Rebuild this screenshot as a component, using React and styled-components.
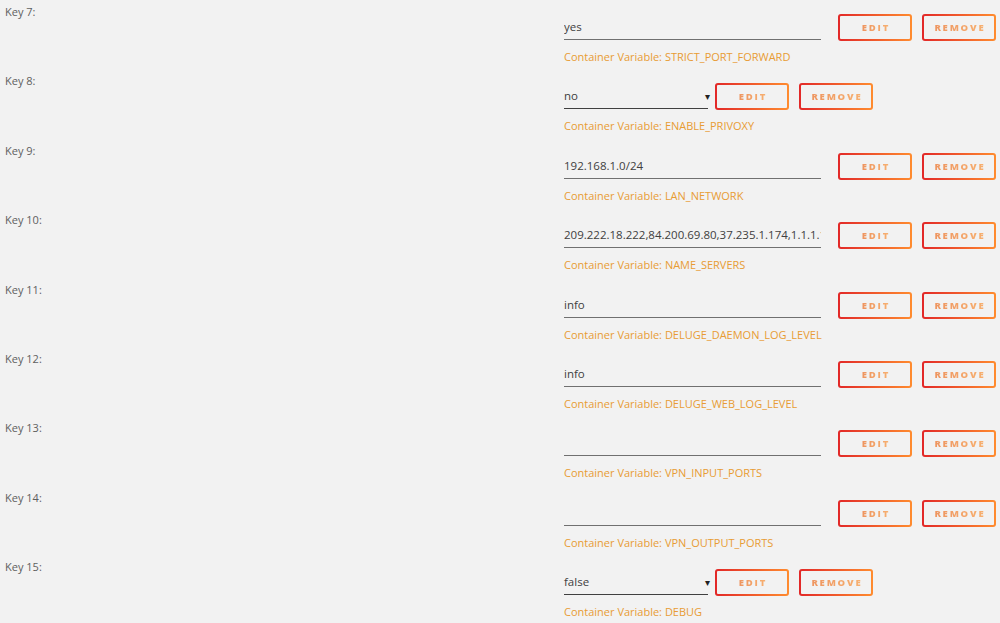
import React from 'react'
import styled, {createGlobalStyle} from 'styled-components'

const Global = createGlobalStyle`
  html, body {
    margin: 0;
    background: #f2f2f2;
    font-family: "Open Sans", "Noto Sans", sans-serif;
  }
`

const rows = [
  {key: 7, value: 'yes', name: 'STRICT_PORT_FORWARD'},
  {key: 8, value: 'no', name: 'ENABLE_PRIVOXY', select: true},
  {key: 9, value: '192.168.1.0/24', name: 'LAN_NETWORK'},
  {key: 10, value: '209.222.18.222,84.200.69.80,37.235.1.174,1.1.1.1', name: 'NAME_SERVERS'},
  {key: 11, value: 'info', name: 'DELUGE_DAEMON_LOG_LEVEL'},
  {key: 12, value: 'info', name: 'DELUGE_WEB_LOG_LEVEL'},
  {key: 13, value: '', name: 'VPN_INPUT_PORTS'},
  {key: 14, value: '', name: 'VPN_OUTPUT_PORTS'},
  {key: 15, value: 'false', name: 'DEBUG', select: true},
]

function App() {
  return (
    <>
      <Global/>
      <Page>
        {rows.map(r => (
          <Row key={r.key}>
            <Label>Key {r.key}:</Label>
            <Field>
              <Controls>
                {r.select ? (
                  <Select>
                    <span>{r.value}</span>
                    <Arrow>▾</Arrow>
                  </Select>
                ) : (
                  <TextInput readOnly value={r.value}/>
                )}
                <Button><span>EDIT</span></Button>
                <Button><span>REMOVE</span></Button>
              </Controls>
              <Hint>Container Variable: {r.name}</Hint>
            </Field>
          </Row>
        ))}
      </Page>
    </>
  )
}

const Page = styled.div`
  display: flex;
  flex-direction: column;
  height: 623px;
  overflow: hidden;
`

const Row = styled.div`
  display: flex;
  height: 69.4px;
  flex-shrink: 0;
`

const Label = styled.div`
  flex-shrink: 0;
  width: 559px;
  padding: 5px 0 0 5px;
  font-size: 11px;
  line-height: 14px;
  color: #606060;
`

const Field = styled.div`
  display: flex;
  flex-direction: column;
  padding-top: 14px;
`

const Controls = styled.div`
  display: flex;
  align-items: flex-start;
  gap: 10px;
  height: 27px;
`

const TextInput = styled.input`
  box-sizing: border-box;
  width: 257px;
  height: 26px;
  margin-right: 7px;
  padding: 0;
  border: none;
  border-bottom: 1px solid #707070;
  background: transparent;
  font-family: inherit;
  font-size: 11.5px;
  color: #404040;
  outline: none;
`

const Select = styled.div`
  box-sizing: border-box;
  display: flex;
  align-items: center;
  justify-content: space-between;
  width: 144px;
  height: 26px;
  margin-right: -3px;
  border-bottom: 1px solid #404040;
  font-size: 11.5px;
  color: #404040;
`

const Arrow = styled.span`
  font-size: 10px;
  color: #222;
  margin-right: -2px;
`

const Button = styled.div`
  box-sizing: border-box;
  display: flex;
  align-items: center;
  justify-content: center;
  width: 74px;
  height: 27px;
  border: 2px solid transparent;
  border-radius: 3px;
  background:
    linear-gradient(#f2f2f2, #f2f2f2) padding-box,
    linear-gradient(90deg, #e22828, #ff8c2f) border-box;
  span {
    font-size: 9.5px;
    font-weight: 800;
    letter-spacing: 1.8px;
    margin-right: -1.8px;
    background: linear-gradient(90deg, #ee9560, #f7b070);
    -webkit-background-clip: text;
    background-clip: text;
    color: transparent;
  }
`

const Hint = styled.div`
  margin-top: 9px;
  font-size: 11px;
  line-height: 14px;
  color: #e89c34;
`

export default App
